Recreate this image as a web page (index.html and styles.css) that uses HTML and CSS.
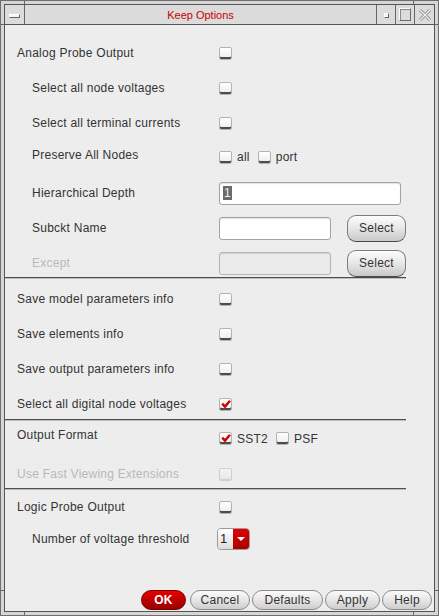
FILE: index.html
```html
<!DOCTYPE html>
<html>
<head>
<meta charset="utf-8">
<title>Keep Options</title>
<link rel="stylesheet" href="styles.css">
</head>
<body>
<div class="window">
  <div class="frame">
    <div class="titlebar">
      <div class="tb-btn tb-left"><span class="tb-bar"></span></div>
      <div class="tb-title">Keep Options</div>
      <div class="tb-btn tb-right"><span class="tb-dot"></span></div>
      <div class="tb-btn tb-right"><span class="tb-square"></span></div>
      <div class="tb-btn tb-right tb-last">
        <svg width="14" height="14" viewBox="0 0 14 14"><path d="M2 2 L12 12 M12 2 L2 12" stroke="#8a8a8a" stroke-width="3" fill="none"/><path d="M2 2 L12 12 M12 2 L2 12" stroke="#f4f4f4" stroke-width="1.2" fill="none"/></svg>
      </div>
    </div>
    <div class="content">
      <div class="form">
        <div class="sec sec-a">
          <div class="row"><span class="label">Analog Probe Output</span><span class="cb"></span></div>
          <div class="row"><span class="label sub">Select all node voltages</span><span class="cb"></span></div>
          <div class="row"><span class="label sub">Select all terminal currents</span><span class="cb"></span></div>
          <div class="row"><span class="label sub label-up">Preserve All Nodes</span>
            <div class="opts"><span class="cb"></span><span class="opt-text">all</span><span class="cb"></span><span class="opt-text">port</span></div>
          </div>
          <div class="row"><span class="label sub">Hierarchical Depth</span><div class="field field-wide"><span class="sel">1</span></div></div>
          <div class="row"><span class="label sub">Subckt Name</span><div class="field field-narrow"></div><button class="btn-select">Select</button></div>
          <div class="row"><span class="label sub disabled">Except</span><div class="field field-narrow field-disabled"></div><button class="btn-select">Select</button></div>
        </div>
        <div class="sep"></div>
        <div class="sec sec-b">
          <div class="row"><span class="label">Save model parameters info</span><span class="cb"></span></div>
          <div class="row"><span class="label">Save elements info</span><span class="cb"></span></div>
          <div class="row"><span class="label">Save output parameters info</span><span class="cb"></span></div>
          <div class="row"><span class="label">Select all digital node voltages</span><span class="cb checked"><svg width="10" height="10" viewBox="0 0 10 10"><path d="M1.2 4.6 L4 7.6 L9 1.8" stroke="#d40000" stroke-width="2.4" fill="none"/></svg></span></div>
        </div>
        <div class="sep sep-b"></div>
        <div class="sec sec-c">
          <div class="row"><span class="label label-up">Output Format</span>
            <div class="opts opts-down"><span class="cb checked"><svg width="10" height="10" viewBox="0 0 10 10"><path d="M1.2 4.6 L4 7.6 L9 1.8" stroke="#d40000" stroke-width="2.4" fill="none"/></svg></span><span class="opt-text">SST2</span><span class="cb"></span><span class="opt-text">PSF</span></div>
          </div>
          <div class="row row-far"><span class="label disabled">Use Fast Viewing Extensions</span><span class="cb cb-disabled"></span></div>
        </div>
        <div class="sep sep-c"></div>
        <div class="sec sec-d">
          <div class="row"><span class="label">Logic Probe Output</span><span class="cb"></span></div>
          <div class="row"><span class="label sub">Number of voltage threshold</span>
            <div class="dropdown"><span class="dd-val">1</span><span class="dd-arrow"></span></div>
          </div>
        </div>
      </div>
      <div class="footer">
        <button class="pbtn pbtn-ok">OK</button>
        <button class="pbtn pbtn-cancel">Cancel</button>
        <button class="pbtn pbtn-defaults">Defaults</button>
        <button class="pbtn pbtn-apply">Apply</button>
        <button class="pbtn pbtn-help">Help</button>
      </div>
    </div>
  </div>
</div>
</body>
</html>
```

FILE: styles.css
```css
html, body {
  margin: 0;
  padding: 0;
  background: #d5d5d5;
}

body {
  font-family: "Liberation Sans", Arial, sans-serif;
  font-size: 12px;
  letter-spacing: 0.25px;
  color: #333;
}

.window {
  width: 439px;
  height: 616px;
  box-sizing: border-box;
  border: 1px solid #6e6e6e;
  padding: 3px;
  background-color: #d6d6d6;
  background-origin: border-box;
  background-image:
    linear-gradient(#666, #666), linear-gradient(#666, #666),
    linear-gradient(#666, #666), linear-gradient(#666, #666),
    linear-gradient(#666, #666), linear-gradient(#666, #666),
    linear-gradient(#666, #666), linear-gradient(#666, #666);
  background-repeat: no-repeat;
  background-position:
    24px 0, 413px 0,
    24px 612px, 413px 612px,
    0 24px, 0 590px,
    435px 24px, 435px 590px;
  background-size:
    1px 4px, 1px 4px,
    1px 4px, 1px 4px,
    4px 1px, 4px 1px,
    4px 1px, 4px 1px;
}

.frame {
  height: 100%;
  box-sizing: border-box;
  border: 1px solid #555;
  display: flex;
  flex-direction: column;
}

/* Title bar */
.titlebar {
  height: 19px;
  flex: none;
  display: flex;
  border-bottom: 1px solid #555;
  background: repeating-linear-gradient(to bottom, #dedede 0 1px, #d9d9d9 1px 2px);
}

.tb-btn {
  display: flex;
  align-items: center;
  justify-content: center;
  flex: none;
}

.tb-left {
  width: 19px;
  border-right: 1px solid #666;
}

.tb-right {
  width: 18px;
  border-left: 1px solid #666;
}

.tb-last {
  width: 19px;
}

.tb-title {
  flex: 1;
  text-align: center;
  color: #c80000;
  font-size: 11px;
  letter-spacing: 0;
  line-height: 20px;
}

.tb-bar {
  width: 9px;
  height: 2px;
  background: #f6f6f6;
  border: 1px solid;
  border-color: #fff #666 #666 #fff;
  margin-top: 2px;
}

.tb-dot {
  width: 3px;
  height: 3px;
  background: #f6f6f6;
  border: 1px solid;
  border-color: #fff #666 #666 #fff;
  margin-top: 2px;
}

.tb-square {
  width: 10px;
  height: 11px;
  border: 1px solid;
  border-color: #fafafa #6a6a6a #6a6a6a #fafafa;
  box-shadow: inset 1px 1px 0 #8a8a8a;
}

/* Content */
.content {
  flex: 1;
  display: flex;
  flex-direction: column;
  background: repeating-linear-gradient(to bottom, #efefef 0 1px, #ebebeb 1px 2px);
}

.form {
  display: flex;
  flex-direction: column;
}

.sec {
  display: flex;
  flex-direction: column;
}

.sec-a {
  padding-top: 17px;
  gap: 13px;
}

.sec-b {
  padding-top: 10px;
  gap: 13px;
}

.sec-c {
  padding-top: 6px;
  gap: 15px;
}

.sec-d {
  padding-top: 7px;
  gap: 10px;
}

.sep {
  width: 401px;
  height: 1px;
  background: #4e4e4e;
  box-shadow: 0 1px 0 #bdbdbd;
  margin-top: 3px;
}

.sep-b {
  margin-top: 4px;
}

.sep-c {
  margin-top: 3px;
}

.row {
  height: 22px;
  display: flex;
  align-items: center;
}

.label {
  width: 214px;
  flex: none;
  box-sizing: border-box;
  padding-left: 12px;
  white-space: nowrap;
  color: #333;
}

.label.sub {
  padding-left: 27px;
}

.label-up {
  position: relative;
  top: -3px;
}

.sec-c .label-up {
  top: -2px;
}

.disabled {
  color: #b9b9b9;
}

/* Checkboxes */
.cb {
  width: 13px;
  height: 13px;
  box-sizing: border-box;
  border: 1px solid #b3b3b3;
  border-radius: 2px;
  background: linear-gradient(#ffffff, #ececec);
  box-shadow: inset 0 -2px 0 #4c4c4c;
  display: flex;
  align-items: center;
  justify-content: center;
  flex: none;
}

.cb svg {
  display: block;
  margin-top: -1px;
}

.cb-disabled {
  border-color: #cfcfcf;
  background: linear-gradient(#f4f4f4, #e7e7e7);
  box-shadow: inset 0 -1px 0 #d0d0d0;
}

.opts {
  display: flex;
  align-items: center;
  margin-top: -2px;
}

.opts-down {
  margin-top: 3px;
}

.opt-text {
  margin-left: 5px;
  margin-right: 8px;
}

/* Text fields */
.field {
  height: 23px;
  box-sizing: border-box;
  border: 1px solid #a3a3a3;
  border-radius: 3px;
  background: #fff;
  box-shadow: inset 0 1px 1px rgba(0, 0, 0, 0.12);
  display: flex;
  align-items: center;
  flex: none;
}

.field-wide {
  width: 182px;
}

.field-narrow {
  width: 112px;
}

.field-disabled {
  background: #ebebeb;
  border-color: #b5b5b5;
}

.sel {
  background: #6a6a6a;
  color: #f2f2f2;
  margin-left: 3px;
  padding: 0 1px;
  line-height: 14px;
}

.btn-select {
  width: 59px;
  height: 27px;
  margin-left: 16px;
  box-sizing: border-box;
  border: 1px solid #7d7d7d;
  border-bottom-color: #4a4a4a;
  border-radius: 9px;
  background: linear-gradient(#fdfdfd, #e6e6e6 50%, #c9c9c9);
  font-family: "Liberation Sans", Arial, sans-serif;
  font-size: 12px;
  letter-spacing: 0.25px;
  color: #333;
  padding: 0;
  flex: none;
}

/* Dropdown */
.dropdown {
  display: flex;
  width: 33px;
  height: 22px;
  box-sizing: border-box;
  border: 1px solid #9a9a9a;
  border-radius: 4px;
  overflow: hidden;
  margin-left: -2px;
  flex: none;
}

.dd-val {
  flex: 1;
  background: linear-gradient(#ffffff, #dcdcdc);
  padding-left: 2px;
  line-height: 20px;
  font-size: 13px;
  color: #222;
}

.dd-arrow {
  width: 16px;
  background: linear-gradient(#e30000, #a80000);
  position: relative;
}

.dd-arrow::after {
  content: "";
  position: absolute;
  left: 4px;
  top: 8px;
  border-left: 4px solid transparent;
  border-right: 4px solid transparent;
  border-top: 4px solid #fff;
}

/* Footer */
.footer {
  margin-top: auto;
  display: flex;
  justify-content: flex-end;
  gap: 2px;
  padding: 0 2px 1px 0;
}

.pbtn {
  height: 20px;
  box-sizing: border-box;
  border: 1px solid #8c8c8c;
  border-radius: 10px;
  background: linear-gradient(#fbfbfb, #e4e4e4 55%, #cdcdcd);
  font-family: "Liberation Sans", Arial, sans-serif;
  font-size: 12px;
  letter-spacing: 0.25px;
  color: #333;
  padding: 0;
}

.pbtn-ok {
  width: 45px;
  margin-right: 2px;
  background: linear-gradient(#e80000, #b60000 60%, #9a0000);
  border-color: #7a0000;
  color: #fff;
  font-weight: bold;
}

.pbtn-cancel {
  width: 60px;
}

.pbtn-defaults {
  width: 71px;
}

.pbtn-apply {
  width: 55px;
}

.pbtn-help {
  width: 50px;
}
```
